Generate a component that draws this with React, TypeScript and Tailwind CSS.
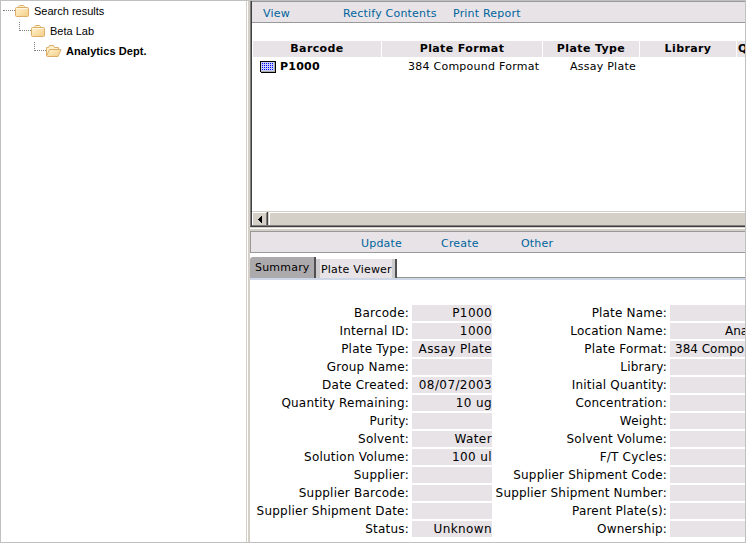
import React from "react";

const LINK = "absolute top-0 text-[#00639c] whitespace-nowrap tracking-[0.2px]";

function Folder({ open = false }: { open?: boolean }) {
  return (
    <svg width="16" height="12" viewBox="0 0 16 12" className="shrink-0">
      <defs>
        <linearGradient id="folderFill" x1="0" y1="0" x2="1" y2="1">
          <stop offset="0" stopColor="#fff3d0" />
          <stop offset="1" stopColor="#f3cd85" />
        </linearGradient>
      </defs>
      {open ? (
        <>
          <path d="M.5 10.500v-8h2l1-2h4l1 2h4v2" fill="#fff0c8" stroke="#dcae6a" />
          <path d="M.5 11l3-6.500h11.500l-3 7H1.500z" fill="url(#folderFill)" stroke="#dcae6a" />
        </>
      ) : (
        <>
          <path d="M3.500 2.500v-1l1-1h4l1 1v1" fill="#fff0c8" stroke="#dcae6a" />
          <rect x="0.500" y="2.500" width="13" height="9" rx="1" fill="url(#folderFill)" stroke="#dcae6a" />
          <path d="M2 3.500h10" stroke="#fff8e4" />
        </>
      )}
    </svg>
  );
}

function PlateIcon() {
  const dots: React.ReactNode[] = [];
  for (let y = 2; y < 10; y += 2)
    for (let x = 2; x < 14; x += 2)
      dots.push(<rect key={`${x}-${y}`} x={x} y={y} width="1" height="1" fill="#0000ff" />);
  return (
    <svg width="16" height="12" viewBox="0 0 16 12" shapeRendering="crispEdges" className="shrink-0">
      <path d="M0 0h16v11l-1 1H1l-1-1z" fill="#000" />
      <rect x="1" y="1" width="14" height="9" fill="#c6cef7" />
      <path d="M1 10h14v1H1zM14 1h1v9h-1z" fill="#adadad" />
      {dots}
    </svg>
  );
}

function TreeRow({ pad, label, bold, open, root }: { pad: string; label: string; bold?: boolean; open?: boolean; root?: boolean }) {
  return (
    <div className={`flex h-5 ${pad}`}>
      <div className={root ? "mt-[9px] h-px w-3 border-t border-dotted border-[#808080]" : "mt-px h-[9px] w-3 border-b border-l border-dotted border-[#808080]"} />
      <div className={open ? "mt-1 w-5" : "mt-1 w-[19px]"}><Folder open={open} /></div>
      <span className={bold ? "font-bold leading-[21px] whitespace-nowrap tracking-[0.08px]" : "leading-[21px] whitespace-nowrap"}>{label}</span>
    </div>
  );
}

const LEFT: [string, string][] = [
  ["Barcode:", "P1000"], ["Internal ID:", "1000"], ["Plate Type:", "Assay Plate"], ["Group Name:", ""],
  ["Date Created:", "08/07/2003"], ["Quantity Remaining:", "10 ug"], ["Purity:", ""], ["Solvent:", "Water"],
  ["Solution Volume:", "100 ul"], ["Supplier:", ""], ["Supplier Barcode:", ""], ["Supplier Shipment Date:", ""], ["Status:", "Unknown"],
];
const RIGHT: [string, string][] = [
  ["Plate Name:", ""], ["Location Name:", "Ana"], ["Plate Format:", "384 Compo"], ["Library:", ""],
  ["Initial Quantity:", ""], ["Concentration:", ""], ["Weight:", ""], ["Solvent Volume:", ""], ["F/T Cycles:", ""],
  ["Supplier Shipment Code:", ""], ["Supplier Shipment Number:", ""], ["Parent Plate(s):", ""], ["Ownership:", ""],
];

export default function App() {
  return (
    <div className="flex h-[543px] w-[746px] overflow-hidden border border-[#c0c0c0] bg-white font-['DejaVu_Sans',sans-serif] text-[11px] text-black">
      <aside className="w-[245px] shrink-0 font-['Liberation_Sans',sans-serif] text-[11px]">
        <TreeRow pad="pl-[2px]" label="Search results" root />
        <TreeRow pad="pl-[18px]" label="Beta Lab" />
        <TreeRow pad="pl-[33px]" label="Analytics Dept." bold open />
      </aside>
      <div className="w-1 shrink-0 border-l border-r-2 border-[#d4d0c8]" />
      <main className="flex w-[495px] shrink-0 flex-col overflow-hidden">
        <section className="flex h-[226px] shrink-0 border-b border-l border-b-[#404040] border-l-[#808080]">
          <div className="flex flex-1 flex-col border-l border-[#404040]">
            <nav className="relative h-[22px] shrink-0 border-y border-[#999] bg-[#e7e3e7] leading-[23px]">
              <span className={`${LINK} left-[11px]`}>View</span>
              <span className={`${LINK} left-[91px]`}>Rectify Contents</span>
              <span className={`${LINK} left-[201px]`}>Print Report</span>
            </nav>
            <div className="mt-[18px] grid shrink-0 grid-cols-[128px_160px_96px_96px_8px] gap-x-px pl-px text-center leading-4 font-bold tracking-[0.38px]">
              <div className="bg-[#e7e3e7]">Barcode</div>
              <div className="bg-[#e7e3e7]">Plate Format</div>
              <div className="bg-[#e7e3e7]">Plate Type</div>
              <div className="bg-[#e7e3e7]">Library</div>
              <div className="bg-[#e7e3e7] pl-px text-left">Q</div>
            </div>
            <div className="flex h-5 items-center pl-2 tracking-[0.25px]">
              <PlateIcon />
              <b className="ml-1 w-[128px]">P1000</b>
              <span className="w-[162px]">384 Compound Format</span>
              <span>Assay Plate</span>
            </div>
            <div className="mt-auto flex h-[15px] border-t border-b border-t-[#d4d0c8] border-b-[#808080] bg-[#d4d0c8]">
              <div className="flex w-[15px] items-center justify-center border-t border-r border-l border-t-white border-l-white border-r-[#808080]">
                <svg width="4" height="7" viewBox="0 0 4 7" shapeRendering="crispEdges"><path d="M4 0v7L0 3.500z" /></svg>
              </div>
              <div className="w-px bg-[#404040]" />
              <div className="ml-px flex-1 border-t border-l border-white" />
            </div>
          </div>
        </section>
        <div className="h-px shrink-0 bg-[#d4d0c8]" />
        <div className="h-px shrink-0 bg-white" />
        <div className="h-[2px] shrink-0 bg-[#d4d0c8]" />
        <nav className="relative h-[22px] shrink-0 border-y border-l border-[#999] bg-[#e7e3e7] leading-[23px]">
          <span className={`${LINK} left-[110px]`}>Update</span>
          <span className={`${LINK} left-[190px]`}>Create</span>
          <span className={`${LINK} left-[270px]`}>Other</span>
        </nav>
        <div className="flex h-[25px] shrink-0 items-end tracking-[0.2px]">
          <div className="h-[21px] w-[66px] rounded-tl-[3px] border-r-2 border-[#505050] bg-[#adaaad] pl-[5px] leading-[22px] whitespace-nowrap">Summary</div>
          <div className="h-[19px] w-[81px] border-r-2 border-[#505050] bg-[#cecbce] pr-[3px] pl-1">
            <div className="h-full bg-[#e7e3e7] pl-px leading-[21px] whitespace-nowrap">Plate Viewer</div>
          </div>
          <div className="h-px flex-1 bg-[#949494]" />
        </div>
        <div className="mb-[25px] h-[2px] shrink-0 bg-[#ced7e7]" />
        <div className="flex text-[12px] leading-4">
          {[LEFT, RIGHT].map((rows, side) => (
            <div key={side} className={side ? "w-[253px]" : "w-[242px]"}>
              {rows.map(([k, v]) => (
                <div key={k} className="mb-[2px] flex h-4">
                  <div className={side ? "mr-[3px] w-[175px] shrink-0 text-right whitespace-nowrap tracking-[0.19px]" : "mr-[3px] w-[159px] shrink-0 text-right whitespace-nowrap tracking-[0.22px]"}>{k}</div>
                  <div className={side ? (v === "Ana" ? "flex-1 bg-[#e7e3e7] pl-[55px]" : "flex-1 bg-[#e7e3e7] pl-[5px] whitespace-nowrap") : "w-20 bg-[#e7e3e7] text-right whitespace-nowrap tracking-[0.4px]"}>{v}</div>
                </div>
              ))}
            </div>
          ))}
        </div>
      </main>
    </div>
  );
}
